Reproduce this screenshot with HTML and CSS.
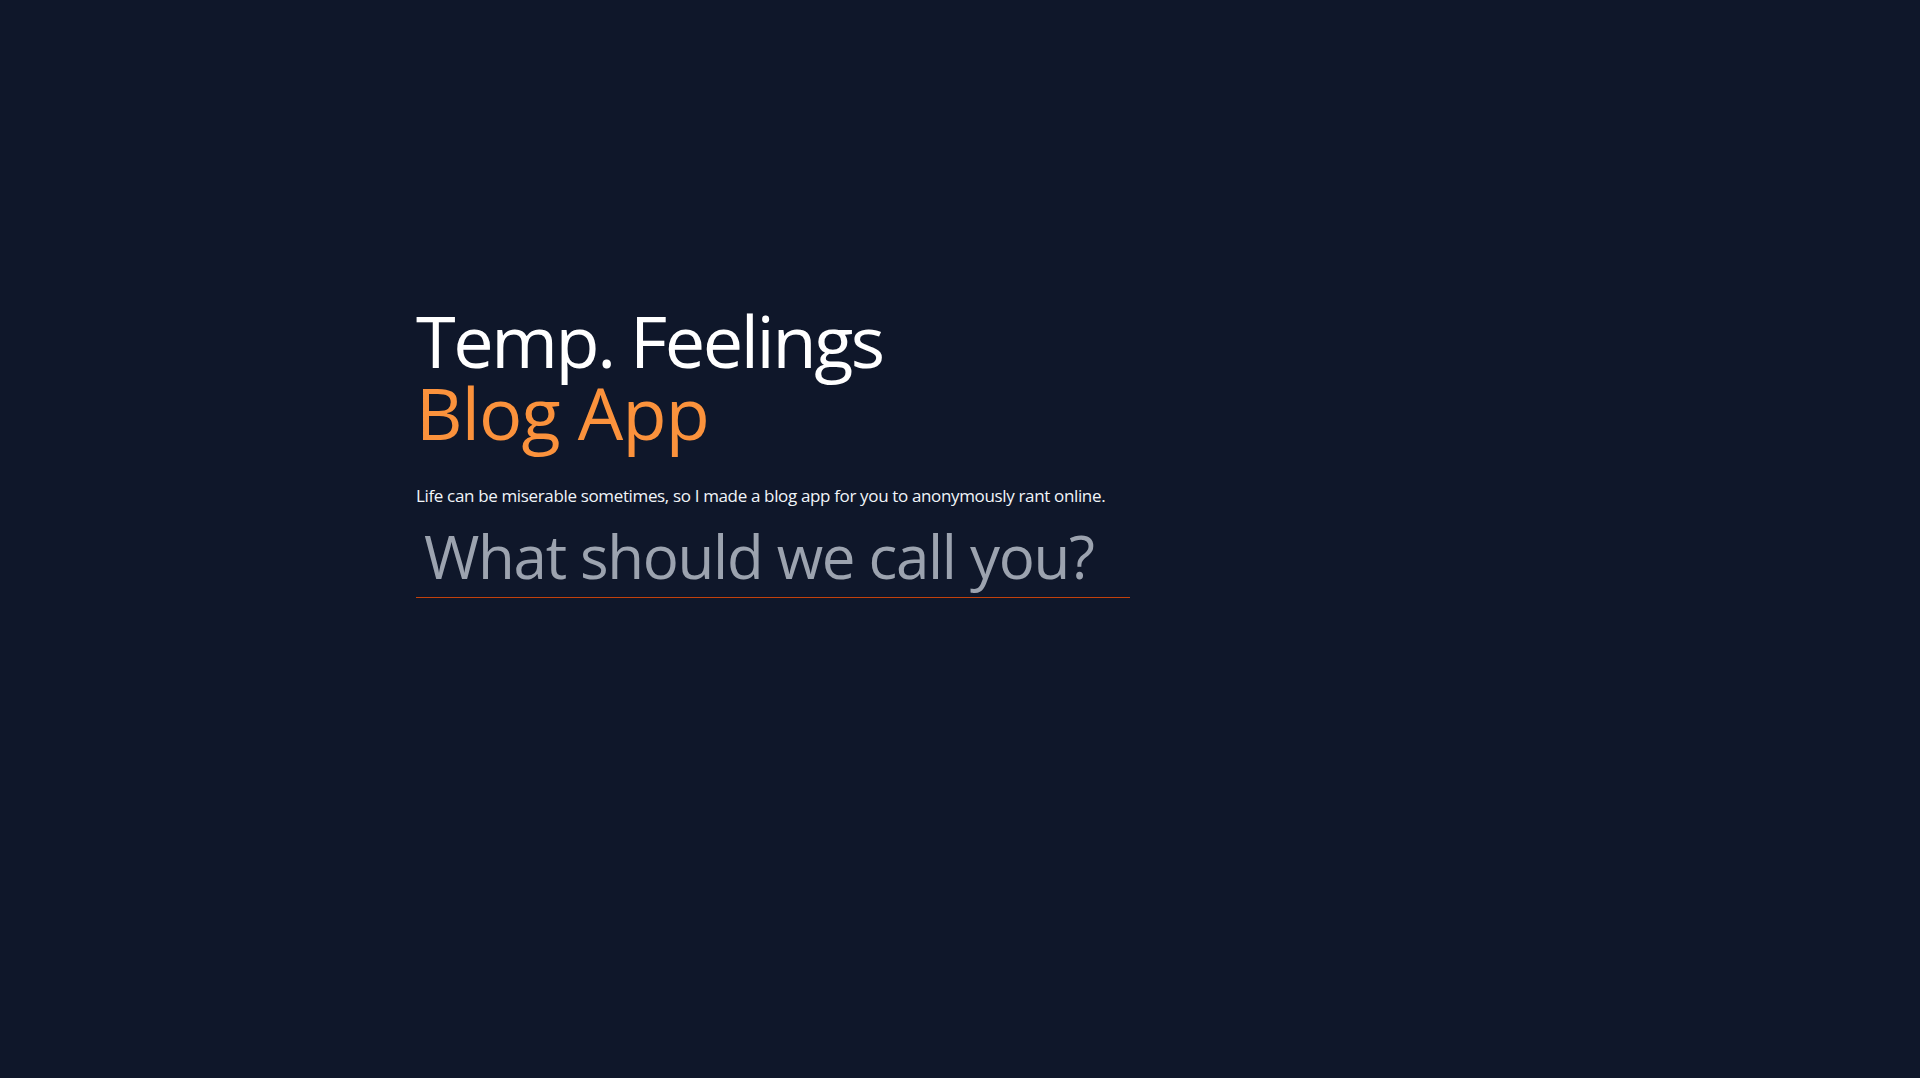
FILE: index.html
```html
<!DOCTYPE html>
<html lang="en">
<head>
<meta charset="utf-8">
<title>Temp. Feelings</title>
<link rel="stylesheet" href="styles.css">
</head>
<body>
<main class="page">
  <section class="hero">
    <h1 class="title">
      <span class="title-main">Temp. Feelings</span>
      <span class="title-accent">Blog App</span>
    </h1>
    <p class="lead">Life can be miserable sometimes, so I made a blog app for you to anonymously rant online.</p>
    <input class="name-input" type="text" placeholder="What should we call you?">
  </section>
</main>
</body>
</html>
```
FILE: styles.css
```css
html, body {
  margin: 0;
  padding: 0;
  background: #0f172a;
  height: 100%;
}
body {
  font-family: "Open Sans", "Noto Sans", sans-serif;
  color: #f8fafc;
}
.page {
  min-height: 100%;
  padding: 304px 0 0 416px;
  box-sizing: border-box;
}
.hero {
  display: flex;
  flex-direction: column;
  align-items: flex-start;
}
.title {
  margin: 0;
  font-size: 72px;
  font-weight: 400;
  line-height: 72px;
}
.title-main {
  display: block;
  color: #ffffff;
  letter-spacing: -2.4px;
}
.title-accent {
  display: block;
  color: #fb923c;
  letter-spacing: -0.8px;
}
.lead {
  margin: 34px 0 0;
  font-size: 17px;
  line-height: 28px;
  color: #f1f5f9;
  letter-spacing: -0.35px;
}
.name-input {
  margin-top: 5px;
  width: 714px;
  height: 83px;
  box-sizing: border-box;
  padding: 0 8px;
  border: none;
  border-bottom: 1px solid #c2410c;
  background: transparent;
  font-family: "Open Sans", "Noto Sans", sans-serif;
  font-size: 60px;
  letter-spacing: -1.3px;
  color: #e5e7eb;
  outline: none;
}
.name-input::placeholder {
  color: #9ca3af;
  opacity: 1;
}
```
